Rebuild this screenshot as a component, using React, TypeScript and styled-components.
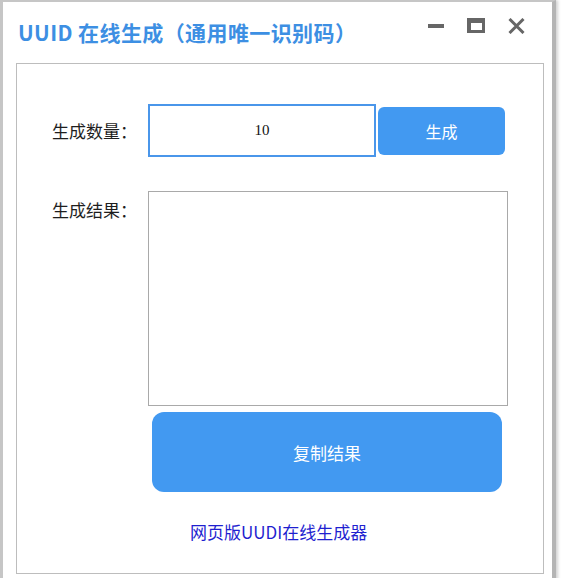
import React from 'react';
import styled, { createGlobalStyle } from 'styled-components';

const cjk = '"Noto Sans CJK SC", "Noto Sans", sans-serif';

const GlobalStyle = createGlobalStyle`
    html, body {
        margin: 0;
        padding: 0;
        background: #ffffff;
        height: 578px;
        overflow: hidden;
        font-family: ${cjk};
    }
`;

const Window = styled.div`
    width: 549px;
    height: 600px;
    background: #ffffff;
    border-left: 3px solid #c6c6c6;
    border-top: 2px solid #c6c6c6;
    border-right: 4px solid #b4b4b4;
    box-shadow: 2px 0 3px rgba(0, 0, 0, 0.18);
    display: flex;
    flex-direction: column;
`;

const TitleBar = styled.div`
    height: 61px;
    display: flex;
    align-items: center;
    padding-left: 15px;
`;

const Title = styled.div`
    flex: 1;
    color: #3d8fe3;
    font-size: 21px;
    font-weight: 700;
    letter-spacing: 0.4px;
    margin-top: -2px;
`;

const Controls = styled.div`
    display: flex;
    align-self: flex-start;
    padding-top: 16px;
    margin-right: 16px;
`;

const ControlButton = styled.button`
    width: 40px;
    height: 16px;
    padding: 0;
    border: none;
    background: none;
    display: flex;
    align-items: center;
    justify-content: center;
    cursor: pointer;
`;

const Panel = styled.div`
    margin: 0 8px 0 13px;
    height: 509px;
    border: 1px solid #bdbdbd;
`;

const Form = styled.div`
    display: grid;
    grid-template-columns: 96px 360px;
    padding: 40px 0 0 35px;
`;

const Label = styled.div<{ top?: number }>`
    font-size: 17px;
    color: #1e1e1e;
    line-height: 24px;
    align-self: ${(p) => (p.top !== undefined ? 'start' : 'center')};
    padding-top: ${(p) => p.top ?? 0}px;
`;

const Row = styled.div`
    display: flex;
    align-items: center;
    gap: 2px;
`;

const CountInput = styled.input`
    box-sizing: border-box;
    width: 228px;
    height: 53px;
    border: 2px solid #4a96ea;
    text-align: center;
    font-family: "Liberation Serif", serif;
    font-size: 15px;
    color: #111;
    outline: none;
`;

const BlueButton = styled.button<{ big?: boolean }>`
    border: none;
    background: #4299f1;
    color: #ffffff;
    font-family: ${cjk};
    font-size: ${(p) => (p.big ? 17 : 16)}px;
    border-radius: ${(p) => (p.big ? 12 : 6)}px;
    width: ${(p) => (p.big ? 350 : 127)}px;
    height: ${(p) => (p.big ? 80 : 48)}px;
    cursor: pointer;
`;

const Result = styled.textarea`
    box-sizing: border-box;
    width: 360px;
    height: 215px;
    margin-top: 34px;
    border: 1px solid #a9a9a9;
    resize: none;
    outline: none;
`;

const CopyWrap = styled.div`
    grid-column: 2;
    padding: 6px 0 0 4px;
`;

const WebLink = styled.a`
    grid-column: 2;
    justify-self: start;
    margin: 28px 0 0 42px;
    font-size: 17px;
    line-height: 24px;
    color: #1f1fd0;
    text-decoration: none;
`;

const Minimize = () => (
    <svg width="16" height="16" viewBox="0 0 16 16">
        <rect x="0" y="6" width="16" height="4" fill="#666" />
    </svg>
);

const Maximize = () => (
    <svg width="18" height="16" viewBox="0 0 18 16">
        <rect x="0" y="0" width="18" height="15" fill="#666" />
        <rect x="4" y="5" width="11" height="7" fill="#fff" />
    </svg>
);

const Close = () => (
    <svg width="17" height="16" viewBox="0 0 17 16">
        <path d="M1.5 1 L15.5 15 M15.5 1 L1.5 15" stroke="#666" strokeWidth="3" />
    </svg>
);

const App: React.FC = () => {
    return (
        <>
            <GlobalStyle />
            <Window>
                <TitleBar>
                    <Title>UUID 在线生成（通用唯一识别码）</Title>
                    <Controls>
                        <ControlButton aria-label="minimize"><Minimize /></ControlButton>
                        <ControlButton aria-label="maximize"><Maximize /></ControlButton>
                        <ControlButton aria-label="close"><Close /></ControlButton>
                    </Controls>
                </TitleBar>
                <Panel>
                    <Form>
                        <Label>生成数量：</Label>
                        <Row>
                            <CountInput defaultValue="10" />
                            <BlueButton>生成</BlueButton>
                        </Row>
                        <Label top={41}>生成结果：</Label>
                        <Result />
                        <CopyWrap>
                            <BlueButton big>复制结果</BlueButton>
                        </CopyWrap>
                        <WebLink href="#">网页版UUDI在线生成器</WebLink>
                    </Form>
                </Panel>
            </Window>
        </>
    );
};

export default App;
